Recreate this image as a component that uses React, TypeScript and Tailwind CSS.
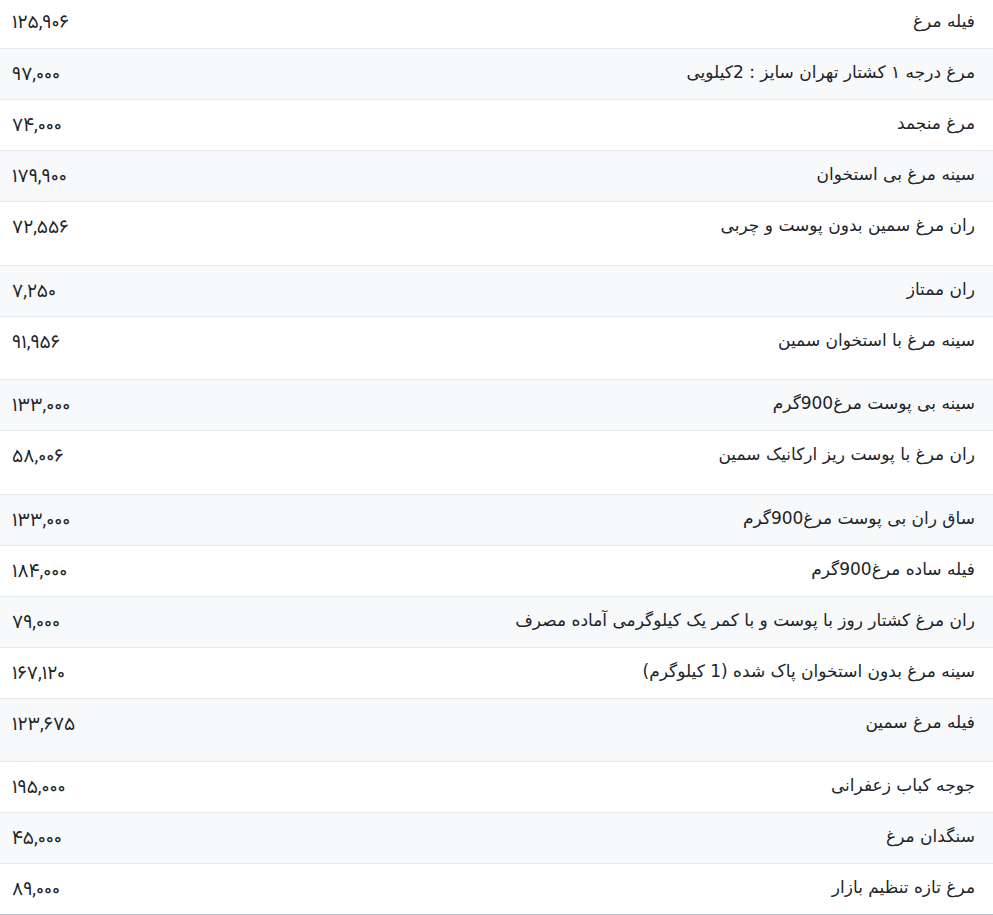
const rows = [
  { name: 'فیله مرغ', price: '۱۲۵,۹۰۶' },
  { name: 'مرغ درجه ۱ کشتار تهران سایز : 2کیلویی', price: '۹۷,۰۰۰' },
  { name: 'مرغ منجمد', price: '۷۴,۰۰۰' },
  { name: 'سینه مرغ بی استخوان', price: '۱۷۹,۹۰۰' },
  { name: 'ران مرغ سمین بدون پوست و چربی', price: '۷۲,۵۵۶', tall: true },
  { name: 'ران ممتاز', price: '۷,۲۵۰' },
  { name: 'سینه مرغ با استخوان سمین', price: '۹۱,۹۵۶', tall: true },
  { name: 'سینه بی پوست مرغ900گرم', price: '۱۳۳,۰۰۰' },
  { name: 'ران مرغ با پوست ریز ارکانیک سمین', price: '۵۸,۰۰۶', tall: true },
  { name: 'ساق ران بی پوست مرغ900گرم', price: '۱۳۳,۰۰۰' },
  { name: 'فیله ساده مرغ900گرم', price: '۱۸۴,۰۰۰' },
  { name: 'ران مرغ کشتار روز با پوست و با کمر یک کیلوگرمی آماده مصرف', price: '۷۹,۰۰۰' },
  { name: 'سینه مرغ بدون استخوان پاک شده (1 کیلوگرم)', price: '۱۶۷,۱۲۰' },
  { name: 'فیله مرغ سمین', price: '۱۲۳,۶۷۵', tall: true },
  { name: 'جوجه کباب زعفرانی', price: '۱۹۵,۰۰۰' },
  { name: 'سنگدان مرغ', price: '۴۵,۰۰۰' },
  { name: 'مرغ تازه تنظیم بازار', price: '۸۹,۰۰۰' },
]

export default function App() {
  return (
    <div className="min-h-[915px] bg-white text-[#212529]">
      <table dir="rtl" className="w-full border-collapse">
        <tbody className="border-b border-[#b9c2d3]">
          {rows.map((row, i) => (
            <tr
              key={i}
              className={`${i === 0 ? '' : 'border-t border-[#e5e8ec]'} ${i % 2 === 1 ? 'bg-[#f8f9fa]' : 'bg-white'}`}
            >
              <td className={`align-top font-['DejaVu_Sans',sans-serif] text-[17px] leading-[24px] pr-[18px] pl-3 ${i === 0 ? 'pt-[9px]' : 'pt-[11px]'} pb-[15px]`}>
                <div className="h-[24px]">{row.name}</div>
              </td>
              <td dir="ltr" className={`align-top text-left font-['Vazirmatn','DejaVu_Sans',sans-serif] text-[19px] leading-[24px] pl-3 pr-3 w-[200px] ${i === 0 ? 'pt-[12px]' : 'pt-[15px]'} pb-[11px]`}>
                <div className="h-[24px]">{row.price}</div>
                {row.tall && <div className="h-[12.5px]" />}
              </td>
            </tr>
          ))}
        </tbody>
      </table>
      <div className="h-px bg-[#dde4f0]" />
    </div>
  )
}
